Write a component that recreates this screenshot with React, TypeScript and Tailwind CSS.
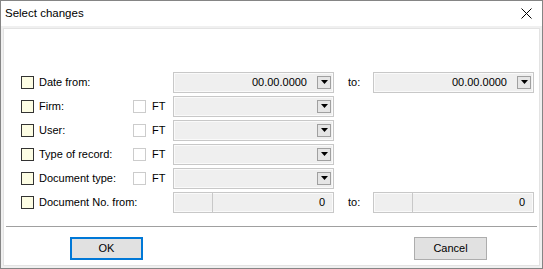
import React from "react";

const font = { fontFamily: '"Liberation Sans", Arial, sans-serif' };

function MainCheck() {
  return <div className="w-[13px] h-[13px] border border-[#333333] bg-[#fdfde4] shrink-0" />;
}

function FtCheck() {
  return (
    <div className="flex items-center w-[40px] shrink-0">
      <div className="w-[13px] h-[13px] border border-[#cccccc] bg-white shrink-0" />
      <span className="ml-[6px] text-[11px] text-[#000]">FT</span>
    </div>
  );
}

function DropBtn() {
  return (
    <div className="w-[14px] h-[13px] border border-[#a0a0a0] bg-[#e5e5e5] flex items-center justify-center shrink-0">
      <svg width="7" height="4" viewBox="0 0 7 4">
        <path d="M0 0 H7 L3.5 4 Z" fill="#000" />
      </svg>
    </div>
  );
}

function Combo({ value }: { value?: string }) {
  return (
    <div className="w-[161px] h-[21px] border border-[#c8c8c8] bg-[#efefef] shadow-[inset_0_0_0_1px_#fafafa] flex items-center justify-end pr-[2px] shrink-0">
      <span className="text-[11px] text-[#000] mr-[10px] leading-none">{value}</span>
      <DropBtn />
    </div>
  );
}

function NumBox() {
  return (
    <div className="w-[161px] h-[21px] border border-[#c8c8c8] bg-[#efefef] shadow-[inset_0_0_0_1px_#fafafa] flex shrink-0">
      <div className="w-[39px] border-r border-[#c8c8c8]" />
      <div className="flex-1 flex items-center justify-end pr-[8px] text-[11px] text-[#000]">0</div>
    </div>
  );
}

function Row({
  label,
  ft,
  children,
}: {
  label: string;
  ft?: boolean;
  children: React.ReactNode;
}) {
  return (
    <div className="h-[24px] flex items-center">
      <MainCheck />
      <span className="ml-[5px] w-[94px] text-[11px] text-[#000] whitespace-nowrap">{label}</span>
      {ft ? <FtCheck /> : <div className="w-[40px] shrink-0" />}
      {children}
    </div>
  );
}

function To() {
  return <span className="ml-[14px] w-[25px] text-[11px] text-[#000]">to:</span>;
}

export default function App() {
  return (
    <div
      className="w-[543px] h-[269px] border border-[#858585] bg-[#f0f0f0] flex flex-col"
      style={font}
    >
      <div className="h-[25px] bg-white flex items-center justify-between pl-[4px] pr-[10px]">
        <span className="text-[11.5px] text-[#000]">Select changes</span>
        <svg width="11" height="11" viewBox="0 0 11 11">
          <path d="M0.5 0.5 L10.5 10.5 M10.5 0.5 L0.5 10.5" stroke="#000" strokeWidth="1" />
        </svg>
      </div>
      <div className="flex-1 px-[2px] pt-[2px] pb-[2px] flex">
        <div className="flex-1 bg-white border border-[#e3e3e3] flex flex-col">
          <div className="pt-[41px] pl-[17px] flex flex-col">
            <Row label="Date from:">
              <Combo value="00.00.0000" />
              <To />
              <Combo value="00.00.0000" />
            </Row>
            <Row label="Firm:" ft>
              <Combo />
            </Row>
            <Row label="User:" ft>
              <Combo />
            </Row>
            <Row label="Type of record:" ft>
              <Combo />
            </Row>
            <Row label="Document type:" ft>
              <Combo />
            </Row>
            <Row label="Document No. from:">
              <NumBox />
              <To />
              <NumBox />
            </Row>
          </div>
          <div className="mt-[12px] mx-[2px] border-t border-[#a0a0a0]" />
          <div className="mt-[10px] flex">
            <button className="ml-[66px] w-[73px] h-[23px] border-2 border-[#0078d7] bg-[#e1e1e1] text-[11px] text-[#000] flex items-center justify-center">
              OK
            </button>
            <button className="ml-[271px] w-[73px] h-[23px] border border-[#adadad] bg-[#e1e1e1] text-[11px] text-[#000] flex items-center justify-center">
              Cancel
            </button>
          </div>
        </div>
      </div>
    </div>
  );
}
